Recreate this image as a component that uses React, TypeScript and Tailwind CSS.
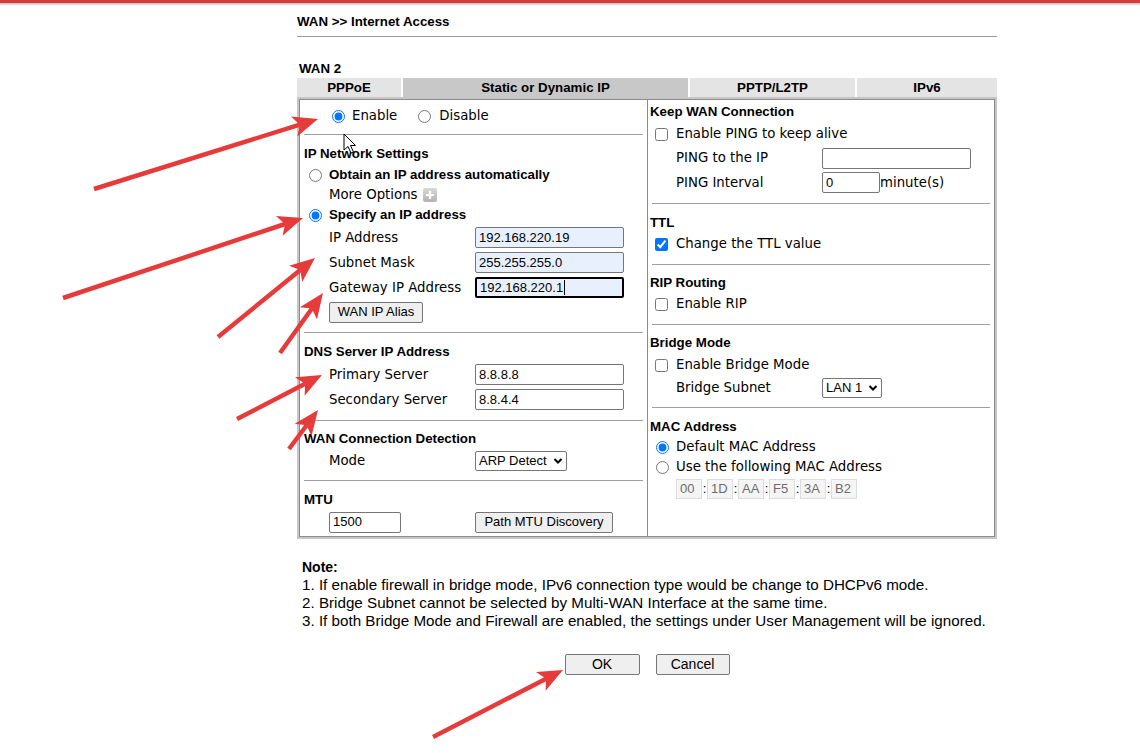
import React from 'react';

const sans = "font-['Liberation_Sans',Arial,sans-serif]";
const dv = "font-['DejaVu_Sans',Verdana,sans-serif] text-[13.3px]";
const head = `${sans} font-bold text-[13.3px] text-black`;

function Sep() {
  return <div className="mx-[4px] h-px bg-[#a0a0a0]" />;
}

function TextBox({ value, w = 149, autofill = false, focus = false }: { value: string; w?: number; autofill?: boolean; focus?: boolean }) {
  const base = `${sans} text-[13px] text-black h-[21px] px-[3px] flex items-center rounded-[2px]`;
  const border = focus ? 'border-2 border-black px-[2px]' : 'border border-[#767676]';
  const bg = autofill ? 'bg-[#e8f0fe]' : 'bg-white';
  return (
    <div className={`${base} ${border} ${bg}`} style={{ width: w }}>
      {value}
      {focus && <span className="ml-px inline-block w-px h-[15px] bg-black" />}
    </div>
  );
}

function Btn({ children, className = '' }: { children: React.ReactNode; className?: string }) {
  return (
    <div className={`${sans} text-[13px] text-black h-[21px] bg-[#efefef] border border-[#767676] rounded-[2px] flex items-center justify-center ${className}`}>
      {children}
    </div>
  );
}

function Drop({ value, w }: { value: string; w: number }) {
  return (
    <div className={`${sans} text-[13px] text-black h-[20px] bg-white border border-[#767676] rounded-[2px] flex items-center pl-[3px] pr-[3px] justify-between`} style={{ width: w }}>
      <span>{value}</span>
      <svg width="10" height="8" viewBox="0 0 10 8">
        <path d="M1.5 2 L5 5.5 L8.5 2" fill="none" stroke="black" strokeWidth="2" />
      </svg>
    </div>
  );
}

function Radio({ checked = false }: { checked?: boolean }) {
  return <input type="radio" readOnly checked={checked} className="m-0 w-[13px] h-[13px]" />;
}

function Check({ checked = false }: { checked?: boolean }) {
  return <input type="checkbox" readOnly checked={checked} className="m-0 w-[13px] h-[13px]" />;
}

function Field({ label, children, h = 25, lw = 146 }: { label: string; children: React.ReactNode; h?: number; lw?: number }) {
  return (
    <div className="flex items-center" style={{ height: h }}>
      <div className={dv} style={{ width: lw }}>{label}</div>
      {children}
    </div>
  );
}

// red callout arrows drawn over the form
const arrows: [number, number, number, number][] = [
  [94, 189, 318, 119],
  [63, 298, 303, 218],
  [218, 337, 315, 258],
  [280, 353, 323, 293],
  [237, 419, 322, 375],
  [289, 449, 318, 410],
  [433, 737, 563, 670],
];

function Arrow({ x1, y1, x2, y2 }: { x1: number; y1: number; x2: number; y2: number }) {
  const dx = x2 - x1;
  const dy = y2 - y1;
  const len = Math.hypot(dx, dy);
  const ux = dx / len;
  const uy = dy / len;
  const nx = -uy;
  const ny = ux;
  const L = 25;
  const W = 10.5;
  const bx = x2 - ux * L;
  const by = y2 - uy * L;
  const mx = bx + ux * 6;
  const my = by + uy * 6;
  const pts = `${x2},${y2} ${bx + nx * W},${by + ny * W} ${mx},${my} ${bx - nx * W},${by - ny * W}`;
  return (
    <g>
      <line x1={x1} y1={y1} x2={mx} y2={my} stroke="#e63b3b" strokeWidth="4.5" />
      <polygon points={pts} fill="#e63b3b" />
    </g>
  );
}

export default function App() {
  return (
    <div className="relative w-[1140px] h-[753px] bg-white overflow-hidden">
      {/* top bar */}
      <div className="h-[3px] bg-[#d83c3c]" />
      <div className="h-[3px] bg-gradient-to-b from-[#bdbdbd] to-white" />

      <div className="ml-[297px] w-[700px]">
        <div className={`${head} h-[26px] pt-[8px] leading-[15px]`}>WAN &gt;&gt; Internet Access</div>
        <div className="mt-[4px] h-px bg-[#9a9a9a]" />
        <div className={`${head} mt-[24px] ml-[2px] leading-[16px] h-[16px]`}>WAN 2</div>

        {/* tabs */}
        <div className="flex gap-[2px] h-[19px] mt-[1px]">
          <div className={`${head} w-[104px] bg-[#e4e4e4] flex items-center justify-center`}>PPPoE</div>
          <div className={`${head} w-[285px] bg-[#c8c8c8] flex items-center justify-center`}>Static or Dynamic IP</div>
          <div className={`${head} w-[165px] bg-[#e4e4e4] flex items-center justify-center`}>PPTP/L2TP</div>
          <div className={`${head} flex-1 bg-[#e4e4e4] flex items-center justify-center`}>IPv6</div>
        </div>

        <div className="flex border-2 border-[#c6c6c6] h-[442px]">
          {/* left column */}
          <div className="w-[349px] border border-[#8c8c8c] flex flex-col">
            <div className="h-[34px] flex items-center pl-[32px] pb-[2px]">
              <Radio checked />
              <span className={`${dv} ml-[7px]`}>Enable</span>
              <span className="ml-[21px] flex"><Radio /></span>
              <span className={`${dv} ml-[8px]`}>Disable</span>
            </div>
            <Sep />
            <div className={`${head} pl-[4px] pt-[9px] h-[30px] leading-[20px]`}>IP Network Settings</div>
            <div className="flex items-center h-[20px] pl-[9px]">
              <Radio />
              <span className={`${head} ml-[7px]`}>Obtain an IP address automatically</span>
            </div>
            <div className="flex items-center h-[20px] pl-[29px]">
              <span className={dv}>More Options</span>
              <span className="ml-[5px] w-[14px] h-[14px] rounded-[2px] bg-gradient-to-b from-[#d8d8d8] to-[#b4b4b4] flex items-center justify-center">
                <svg width="10" height="10" viewBox="0 0 10 10">
                  <path d="M5 1 V9 M1 5 H9" stroke="white" strokeWidth="2.2" />
                </svg>
              </span>
            </div>
            <div className="flex items-center h-[20px] pl-[9px]">
              <Radio checked />
              <span className={`${head} ml-[7px]`}>Specify an IP address</span>
            </div>
            <div className="pl-[29px]">
              <Field label="IP Address"><TextBox value="192.168.220.19" autofill /></Field>
              <Field label="Subnet Mask"><TextBox value="255.255.255.0" autofill /></Field>
              <Field label="Gateway IP Address"><TextBox value="192.168.220.1" autofill focus /></Field>
              <div className="h-[24px] flex items-center">
                <Btn className="w-[94px]">WAN IP Alias</Btn>
              </div>
            </div>
            <div className="h-[8px]" />
            <Sep />
            <div className={`${head} pl-[4px] pt-[9px] h-[29px] leading-[20px]`}>DNS Server IP Address</div>
            <div className="pl-[29px]">
              <Field label="Primary Server"><TextBox value="8.8.8.8" /></Field>
              <Field label="Secondary Server"><TextBox value="8.8.4.4" /></Field>
            </div>
            <div className="h-[8px]" />
            <Sep />
            <div className={`${head} pl-[4px] pt-[8px] h-[28px] leading-[20px]`}>WAN Connection Detection</div>
            <div className="pl-[29px]">
              <Field label="Mode" h={24}><Drop value="ARP Detect" w={92} /></Field>
            </div>
            <div className="h-[7px]" />
            <Sep />
            <div className={`${head} pl-[4px] pt-[9px] h-[29px] leading-[20px]`}>MTU</div>
            <div className="pl-[29px] flex items-center h-[24px]">
              <div className="w-[146px]"><TextBox value="1500" w={72} /></div>
              <Btn className="w-[138px]">Path MTU Discovery</Btn>
            </div>
          </div>

          {/* right column */}
          <div className="flex-1 border border-[#8c8c8c] border-l-0 flex flex-col">
            <div className={`${head} pl-[2px] pt-[2px] h-[22px] leading-[20px]`}>Keep WAN Connection</div>
            <div className="flex items-center h-[24px] pl-[7px]">
              <Check />
              <span className={`${dv} ml-[8px]`}>Enable PING to keep alive</span>
            </div>
            <div className="pl-[28px]">
              <Field label="PING to the IP" h={24}><TextBox value="" /></Field>
              <Field label="PING Interval">
                <TextBox value="0" w={58} />
                <span className={dv}>minute(s)</span>
              </Field>
            </div>
            <div className="h-[8px]" />
            <Sep />
            <div className={`${head} pl-[2px] pt-[9px] h-[29px] leading-[20px]`}>TTL</div>
            <div className="flex items-center h-[22px] pl-[7px]">
              <Check checked />
              <span className={`${dv} ml-[8px]`}>Change the TTL value</span>
            </div>
            <div className="h-[9px]" />
            <Sep />
            <div className={`${head} pl-[2px] pt-[8px] h-[28px] leading-[20px]`}>RIP Routing</div>
            <div className="flex items-center h-[22px] pl-[7px]">
              <Check />
              <span className={`${dv} ml-[8px]`}>Enable RIP</span>
            </div>
            <div className="h-[9px]" />
            <Sep />
            <div className={`${head} pl-[2px] pt-[8px] h-[28px] leading-[20px]`}>Bridge Mode</div>
            <div className="flex items-center h-[24px] pl-[7px]">
              <Check />
              <span className={`${dv} ml-[8px]`}>Enable Bridge Mode</span>
            </div>
            <div className="pl-[28px]">
              <Field label="Bridge Subnet" h={22}><Drop value="LAN 1" w={60} /></Field>
            </div>
            <div className="h-[8px]" />
            <Sep />
            <div className={`${head} pl-[2px] pt-[9px] h-[29px] leading-[20px]`}>MAC Address</div>
            <div className="flex items-center h-[20px] pl-[8px]">
              <Radio checked />
              <span className={`${dv} ml-[7px]`}>Default MAC Address</span>
            </div>
            <div className="flex items-center h-[20px] pl-[8px]">
              <Radio />
              <span className={`${dv} ml-[7px]`}>Use the following MAC Address</span>
            </div>
            <div className="flex items-center h-[24px] pl-[28px]">
              {['00', '1D', 'AA', 'F5', '3A', 'B2'].map((b, i) => (
                <React.Fragment key={b}>
                  {i > 0 && <span className={`${sans} text-[13px] w-[5px] text-center`}>:</span>}
                  <div className={`${sans} text-[13px] text-[#6d6d6d] w-[26px] h-[20px] bg-[#f5f5f5] border border-[#dcdcdc] flex items-center pl-[3px]`}>{b}</div>
                </React.Fragment>
              ))}
            </div>
          </div>
        </div>

        {/* notes */}
        <div className={`${sans} text-[15.2px] text-black leading-[18px] ml-[5px] mt-[19px]`}>
          <div className="font-bold text-[14px]">Note:</div>
          <div>1. If enable firewall in bridge mode, IPv6 connection type would be change to DHCPv6 mode.</div>
          <div>2. Bridge Subnet cannot be selected by Multi-WAN Interface at the same time.</div>
          <div>3. If both Bridge Mode and Firewall are enabled, the settings under User Management will be ignored.</div>
        </div>

        <div className="flex justify-center gap-[16px] mt-[24px]">
          <Btn className="w-[75px] h-[20px] text-[14px]">OK</Btn>
          <Btn className="w-[74px] h-[20px] text-[14px]">Cancel</Btn>
        </div>
      </div>

      <svg className="absolute inset-0 pointer-events-none" width="1140" height="753" viewBox="0 0 1140 753">
        {arrows.map(([a, b, c, d], i) => (
          <Arrow key={i} x1={a} y1={b} x2={c} y2={d} />
        ))}
        {/* mouse pointer */}
        <path d="M344 134 L344 150 L348 146.5 L351 153 L353.5 152 L350.5 145.5 L355.5 145.5 Z" fill="white" stroke="black" strokeWidth="1" />
      </svg>
    </div>
  );
}
